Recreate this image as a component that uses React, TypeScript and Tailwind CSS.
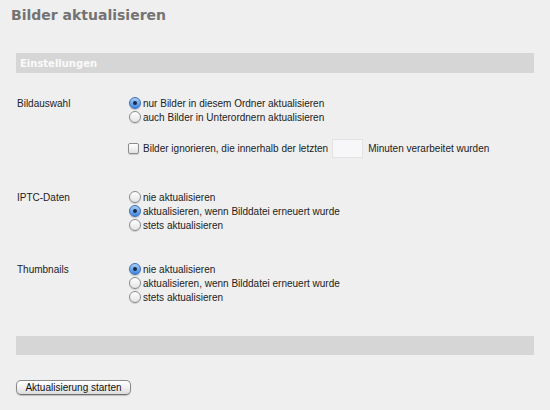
import React from 'react';

const font = { fontFamily: '"Liberation Sans", Arial, sans-serif' };

function Radio({ checked }: { checked?: boolean }) {
  return checked ? (
    <span className="relative inline-flex h-[12px] w-[12px] shrink-0 items-center justify-center rounded-full border border-[#3d6fb5] bg-gradient-to-b from-[#a9cdf5] to-[#3a86e0] shadow-[0_1px_1px_rgba(0,0,0,0.2)]">
      <span className="h-[4px] w-[4px] rounded-full bg-[#1b2a44]" />
    </span>
  ) : (
    <span className="inline-block h-[12px] w-[12px] shrink-0 rounded-full border border-[#8c8c8c] bg-gradient-to-b from-[#ffffff] to-[#e4e4e4] shadow-[0_1px_1px_rgba(0,0,0,0.15)]" />
  );
}

function Option({ label, checked }: { label: string; checked?: boolean }) {
  return (
    <div className="flex h-[14px] items-center gap-[2px]">
      <Radio checked={checked} />
      <span>{label}</span>
    </div>
  );
}

function Row({ label, children, className = '' }: { label: string; children: React.ReactNode; className?: string }) {
  return (
    <div className={`flex ${className}`}>
      <div className="flex h-[14px] w-[113px] shrink-0 items-center pl-[1px]">{label}</div>
      <div className="flex flex-col">{children}</div>
    </div>
  );
}

export default function App() {
  return (
    <div className="h-[410px] w-[550px] bg-[#efefef] text-[10px] text-[#222]" style={font}>
      <h1
        className="pl-[11px] pt-[6px] text-[14px] font-bold leading-[18px] text-[#737373]"
        style={{ fontFamily: '"DejaVu Sans", Verdana, sans-serif' }}
      >
        Bilder aktualisieren
      </h1>

      <div className="mx-[16px] mt-[29px]">
        <div
          className="flex h-[20px] items-center bg-[#d6d6d6] pl-[4px] text-[10px] font-bold text-[#fafafa]"
          style={{ fontFamily: '"DejaVu Sans", Verdana, sans-serif' }}
        >
          Einstellungen
        </div>

        <Row label="Bildauswahl" className="mt-[23px]">
          <Option label="nur Bilder in diesem Ordner aktualisieren" checked />
          <Option label="auch Bilder in Unterordnern aktualisieren" />
          <div className="mt-[15px] flex h-[19px] items-center">
            <span className="ml-[-1px] inline-block h-[11px] w-[11px] rounded-[2px] border border-[#8c8c8c] bg-gradient-to-b from-[#ffffff] to-[#e2e2e2] shadow-[0_1px_1px_rgba(0,0,0,0.15)]" />
            <span className="ml-[4px]">Bilder ignorieren, die innerhalb der letzten</span>
            <input
              type="text"
              className="ml-[4px] h-[19px] w-[31px] border border-[#e2e2e2] bg-[#f7f7f9] outline-none"
            />
            <span className="ml-[5px]">Minuten verarbeitet wurden</span>
          </div>
        </Row>

        <Row label="IPTC-Daten" className="mt-[32px]">
          <Option label="nie aktualisieren" />
          <Option label="aktualisieren, wenn Bilddatei erneuert wurde" checked />
          <Option label="stets aktualisieren" />
        </Row>

        <Row label="Thumbnails" className="mt-[30px]">
          <Option label="nie aktualisieren" checked />
          <Option label="aktualisieren, wenn Bilddatei erneuert wurde" />
          <Option label="stets aktualisieren" />
        </Row>

        <div className="mt-[32px] h-[19px] bg-[#d6d6d6]" />

        <button className="mt-[25px] flex h-[15px] w-[115px] items-center justify-center rounded-[5px] border border-[#8a8a8a] border-b-[#6e6e6e] bg-gradient-to-b from-[#ffffff] via-[#f1f1f1] to-[#dcdcdc] text-[10px] text-[#111] shadow-[0_1px_1px_rgba(0,0,0,0.2)]">
          Aktualisierung starten
        </button>
      </div>
    </div>
  );
}
